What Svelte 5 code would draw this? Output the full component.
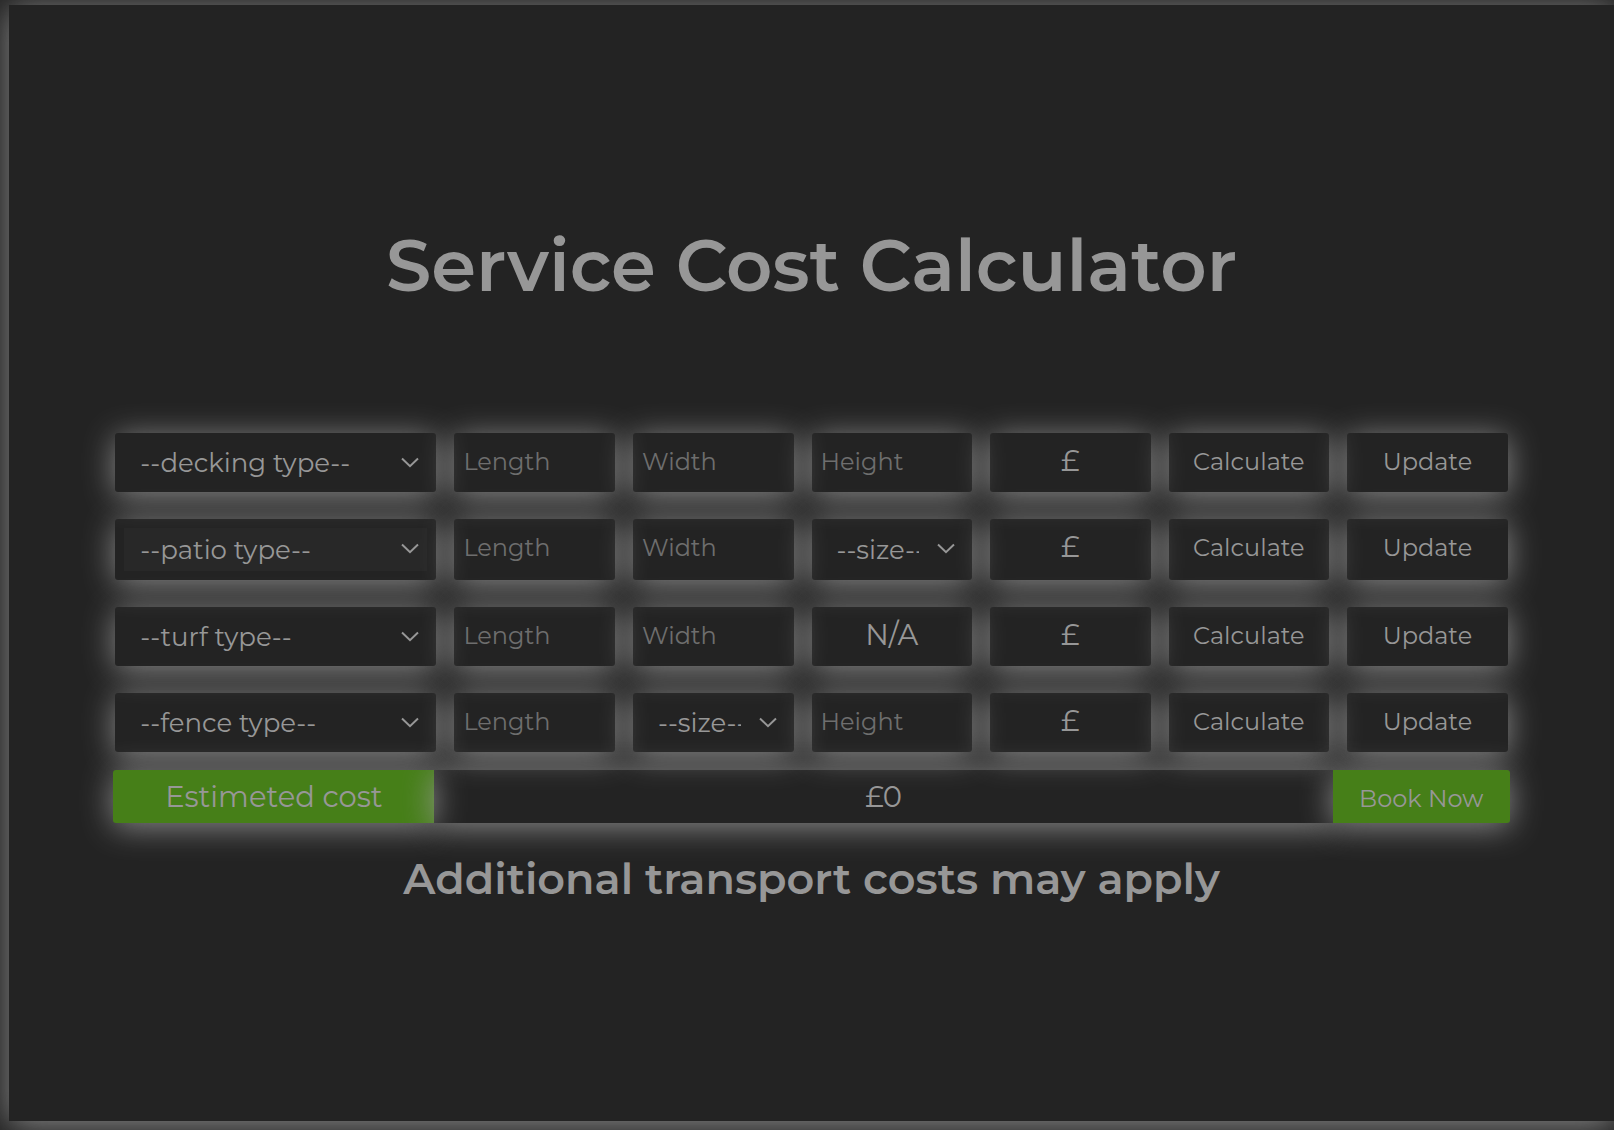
<script>
  const rows = [
    { name: 'decking', cells: ['Length', 'Width', 'Height'] },
    { name: 'patio', cells: ['Length', 'Width', '--size--'] },
    { name: 'turf', cells: ['Length', 'Width', 'N/A'] },
    { name: 'fence', cells: ['Length', '--size--', 'Height'] }
  ];
</script>

{#snippet picker(label, text)}
  <div class="field">
    <select aria-label={label}>
      <option>{text}</option>
    </select>
    <svg class="chevron" viewBox="0 0 18 11" aria-hidden="true">
      <path d="M1 1.5 L9 9.2 L17 1.5" />
    </svg>
  </div>
{/snippet}

<main class="card">
  <h1>Service Cost Calculator</h1>

  <form class="calculator" onsubmit={(e) => e.preventDefault()}>
    {#each rows as row}
      <div class="row {row.name}">
        {@render picker(`${row.name} type`, `--${row.name} type--`)}
        {#each row.cells as cell}
          {#if cell === '--size--'}
            {@render picker(`${row.name} size`, cell)}
          {:else if cell === 'N/A'}
            <div class="field value">{cell}</div>
          {:else}
            <div class="field">
              <input type="text" placeholder={cell} aria-label={`${row.name} ${cell}`} />
            </div>
          {/if}
        {/each}
        <output class="field value">£</output>
        <button type="button" class="field">Calculate</button>
        <button type="button" class="field">Update</button>
      </div>
    {/each}

    <div class="summary">
      <div class="label">Estimeted cost</div>
      <output class="total">£0</output>
      <button type="button" class="book">Book Now</button>
    </div>
  </form>

  <h2>Additional transport costs may apply</h2>
</main>

<style>
  :global(body) {
    margin: 0;
    background: #232323;
  }

  .card,
  .card * {
    box-sizing: border-box;
  }

  .card {
    --glow: 0 4px 32px rgba(153, 153, 153, 0.88);
    display: flex;
    flex-direction: column;
    align-items: center;
    min-height: calc(100vh - 14px);
    margin: 5px 0 9px 9px;
    padding-top: 212px;
    background: #232323;
    box-shadow: var(--glow);
    color: #979797;
    font-family: Montserrat, Inter, sans-serif;
    font-weight: 400;
  }

  h1,
  h2 {
    margin: 0;
    font-weight: 600;
    text-align: center;
  }

  h1 {
    font-size: 72px;
    line-height: 96px;
  }

  h2 {
    margin-top: 32px;
    font-size: 43px;
    line-height: 48px;
  }

  .calculator {
    display: flex;
    flex-direction: column;
    gap: 18px;
    width: 87%;
    margin-top: 120px;
  }

  .row {
    display: grid;
    grid-template-columns: minmax(0, 2fr) repeat(6, minmax(0, 1fr));
    gap: 18px;
    min-height: 59px;
    margin: 0 2px;
  }

  .row + .row {
    margin-top: 9px;
  }

  .patio {
    min-height: 61px;
  }

  .field {
    position: relative;
    display: flex;
    align-items: flex-start;
    min-width: 0;
    padding: 9px;
    border: 0;
    border-radius: 3px;
    background: transparent;
    box-shadow: var(--glow);
    color: inherit;
  }

  input,
  select {
    width: 100%;
    min-width: 0;
    margin: 0;
    padding: 0;
    border: 0;
    background: transparent;
    color: inherit;
    font: inherit;
  }

  input {
    height: 38px;
    font-size: 24px;
  }

  input::placeholder {
    color: #6e6e6e;
    opacity: 1;
  }

  select {
    align-self: stretch;
    appearance: none;
    padding: 0 44px 0 16px;
    overflow: hidden;
    font-size: 26px;
  }

  .patio > :first-child select {
    background: #282828;
  }

  .chevron {
    position: absolute;
    top: 24px;
    right: 17px;
    width: 18px;
    height: 11px;
    fill: none;
    stroke: #979797;
    stroke-width: 2;
    pointer-events: none;
  }

  .value,
  button {
    justify-content: center;
  }

  .value,
  .label,
  .total {
    font-size: 29px;
    line-height: 38px;
  }

  button {
    font: inherit;
    font-size: 24px;
    line-height: 40px;
    cursor: pointer;
  }

  .summary {
    position: relative;
    z-index: 1;
    display: grid;
    grid-template-columns: 23% 1fr 177px;
    min-height: 53px;
  }

  .summary > * {
    display: flex;
    align-items: center;
    justify-content: center;
    box-shadow: var(--glow);
  }

  .label,
  .book {
    background: #467f18;
  }

  .label {
    border-radius: 3px 0 0 3px;
  }

  .book {
    padding: 4px 0 0;
    border: 0;
    border-radius: 0 3px 3px 0;
    color: #979797;
  }
</style>
